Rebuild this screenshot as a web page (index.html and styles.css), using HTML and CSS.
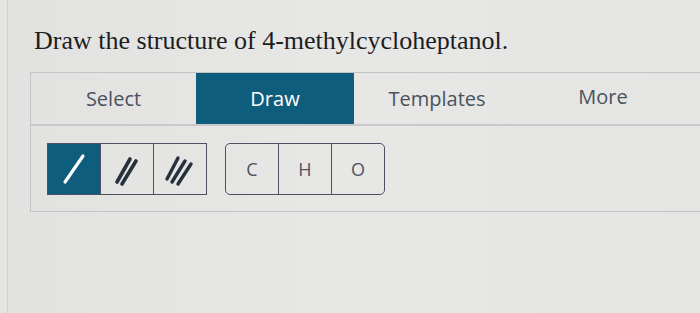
FILE: index.html
```html
<!DOCTYPE html>
<html>
<head>
<meta charset="utf-8">
<link rel="stylesheet" href="styles.css">
</head>
<body>
<div class="page">
  <h1 class="question">Draw the structure of 4-methylcycloheptanol.</h1>
  <div class="panel">
    <div class="tabs">
      <div class="tab tab-select">Select</div>
      <div class="tab tab-draw active">Draw</div>
      <div class="tab tab-templates">Templates</div>
      <div class="tab tab-more">More</div>
    </div>
    <div class="tools">
      <div class="group bonds">
        <div class="cell active">
          <svg width="52" height="50" viewBox="0 0 52 50"><line x1="17" y1="38" x2="35" y2="12" stroke="#fff" stroke-width="3.2" stroke-linecap="round"/></svg>
        </div>
        <div class="cell">
          <svg width="52" height="50" viewBox="0 0 52 50"><g stroke="#27313c" stroke-width="3.6" stroke-linecap="round"><line x1="16" y1="38" x2="29" y2="15"/><line x1="21" y1="40" x2="35" y2="17"/></g></svg>
        </div>
        <div class="cell">
          <svg width="52" height="50" viewBox="0 0 52 50"><g stroke="#27313c" stroke-width="3.4" stroke-linecap="round"><line x1="13" y1="35" x2="24" y2="14"/><line x1="18" y1="38" x2="31" y2="17"/><line x1="24" y1="40" x2="37" y2="20"/></g></svg>
        </div>
      </div>
      <div class="group atoms">
        <div class="cell atom">C</div>
        <div class="cell atom">H</div>
        <div class="cell atom">O</div>
      </div>
    </div>
  </div>
</div>
</body>
</html>
```
FILE: styles.css
```css
html, body {
  margin: 0;
  padding: 0;
}
body {
  width: 700px;
  height: 313px;
  overflow: hidden;
  background: #e4e4e3;
}
.page {
  height: 313px;
  margin-left: 7px;
  border-left: 1px solid #cfcfcf;
  padding-left: 22px;
  padding-top: 24px;
  box-sizing: border-box;
  background: linear-gradient(90deg, #e2e2e1 0%, #e7e7e6 50%, #e5e5e4 100%);
}
.question {
  margin: 0 0 0 4px;
  font-family: "Liberation Serif", "Times New Roman", serif;
  font-weight: normal;
  font-size: 26px;
  line-height: 33px;
  color: #1d1d1f;
}
.panel {
  margin-top: 15px;
  width: 700px;
  border: 1px solid #c3c3c3;
  border-right: none;
}
.tabs {
  display: flex;
  height: 51px;
  border-bottom: 2px solid #c9c9c9;
}
.tab {
  display: flex;
  align-items: center;
  justify-content: center;
  font-family: "Open Sans", "Noto Sans", sans-serif;
  font-size: 20px;
  color: #4a5260;
}
.tab-select { width: 165px; }
.tab-draw { width: 158px; }
.tab-templates { width: 166px; }
.tab-more { width: 166px; padding-bottom: 4px; box-sizing: border-box; }
.tab.active {
  background: #0f5d7c;
  color: #ffffff;
}
.tools {
  display: flex;
  gap: 18px;
  padding: 17px 0 0 16px;
  height: 68px;
}
.group {
  display: flex;
  height: 52px;
  border: 1.5px solid #4b5362;
  box-sizing: border-box;
}
.atoms {
  border-radius: 5px;
}
.cell {
  width: 52px;
  display: flex;
  align-items: center;
  justify-content: center;
}
.cell + .cell {
  border-left: 1.5px solid #4b5362;
}
.cell.active {
  background: #0f5d7c;
}
.atom {
  font-family: "Open Sans", "Noto Sans", sans-serif;
  font-size: 18px;
  color: #4b5362;
}
```
